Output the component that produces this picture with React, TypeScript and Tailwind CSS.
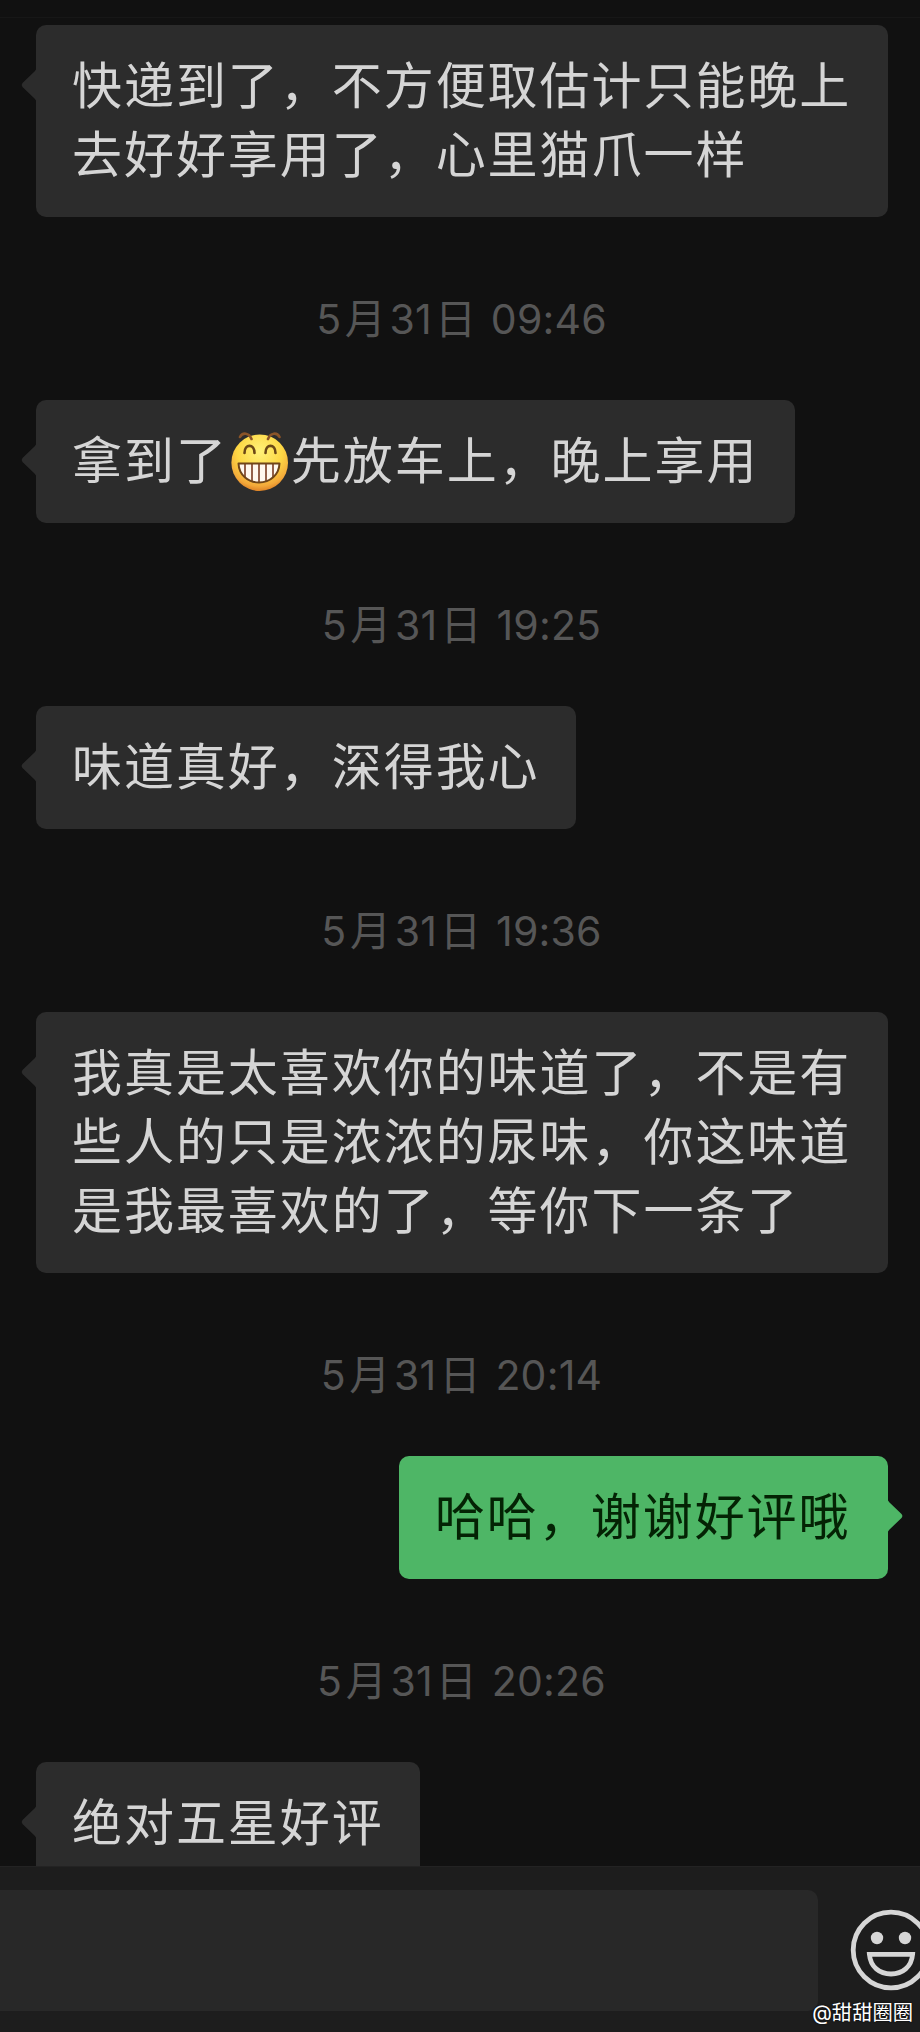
import type { ReactNode } from "react";
import clsx from "clsx";

type ChatItem =
    | { kind: "time"; month: number; day: number; time: string }
    | { kind: "message"; mine?: boolean; lines: ReactNode[] };

function GrinEmoji() {
    return (
        <svg viewBox="0 0 63 62" className="inline-block w-[63px] h-[62px] -mt-2 -mb-1 align-[-10.5px]">
            <defs>
                <radialGradient id="face" cx="0.5" cy="0.3" r="0.72">
                    <stop offset="0" stopColor="#fff27a" />
                    <stop offset="0.55" stopColor="#fdd744" />
                    <stop offset="0.85" stopColor="#f3a93a" />
                    <stop offset="1" stopColor="#d97a22" />
                </radialGradient>
                <clipPath id="teeth">
                    <path d="M10.500 31.500H51.500C51 43 42 50.500 31 50.500S11 43 10.500 31.500Z" />
                </clipPath>
            </defs>
            <circle cx="31.700" cy="30.700" r="28.300" fill="url(#face)" />
            <path d="M12 5C14.500 0 21 0.500 23.500 7M40 7C42.500 0.500 49 0 51.500 5" fill="none" stroke="#8a5428" strokeWidth="2.600" strokeLinecap="round" />
            <path d="M16.500 21C16.500 11.500 26.500 11.500 26.500 21M37.500 21C37.500 11.500 47.500 11.500 47.500 21" fill="none" stroke="#6b4716" strokeWidth="2.600" strokeLinecap="round" />
            <g clipPath="url(#teeth)">
                <rect x="10" y="31" width="42" height="22" fill="#fff8ee" />
                <path d="M17 31V54M24 31V54M31 31V54M38 31V54M45 31V54" stroke="#93614a" strokeWidth="2" />
            </g>
            <path d="M10.500 31.500H51.500C51 43 42 50.500 31 50.500S11 43 10.500 31.500Z" fill="none" stroke="#6f4519" strokeWidth="2" strokeLinejoin="round" />
        </svg>
    );
}

const items: ChatItem[] = [
    { kind: "message", lines: ["快递到了，不方便取估计只能晚上", "去好好享用了，心里猫爪一样"] },
    { kind: "time", month: 5, day: 31, time: "09:46" },
    { kind: "message", lines: [<>拿到了<GrinEmoji />先放车上，晚上享用</>] },
    { kind: "time", month: 5, day: 31, time: "19:25" },
    { kind: "message", lines: ["味道真好，深得我心"] },
    { kind: "time", month: 5, day: 31, time: "19:36" },
    { kind: "message", lines: ["我真是太喜欢你的味道了，不是有", "些人的只是浓浓的尿味，你这味道", "是我最喜欢的了，等你下一条了"] },
    { kind: "time", month: 5, day: 31, time: "20:14" },
    { kind: "message", mine: true, lines: ["哈哈，谢谢好评哦"] },
    { kind: "time", month: 5, day: 31, time: "20:26" },
    { kind: "message", lines: ["绝对五星好评"] },
];

function Timestamp({ month, day, time }: { month: number; day: number; time: string }) {
    return (
        <div className="h-[183px] shrink-0 pt-[22px] pl-[3px] flex items-center justify-center">
            <p className="text-[41px] tracking-[0.2px] text-[#565656] whitespace-pre">
                {month}<span className="mx-[3.5px]">月</span>{day}<span className="mx-[3px]">日</span> {time}
            </p>
        </div>
    );
}

function Bubble({ mine, lines }: { mine?: boolean; lines: ReactNode[] }) {
    return (
        <div className={clsx("flex shrink-0 pr-8 pl-9", mine && "justify-end")}>
            <div
                className={clsx(
                    "relative rounded-[10px] pl-9 pt-[27px] pb-[27px] text-[50px] leading-[69px] tracking-[1.95px] whitespace-nowrap",
                    mine ? "pr-[37.5px] bg-[#4eb666] text-[#042304]" : "pr-[36.5px] bg-[#2c2c2c] text-[#d5d5d5]"
                )}
            >
                <svg
                    viewBox="0 0 16 34"
                    className={clsx(
                        "absolute top-[43px] w-4 h-[34px]",
                        mine ? "left-full -scale-x-100 text-[#4eb666]" : "right-full text-[#2c2c2c]"
                    )}
                >
                    <path d="M16 1.500L14.500 3.500L2.500 15Q0.800 17 2.500 19L14.500 30.500L16 32.500Z" fill="currentColor" />
                </svg>
                {lines.map((line, i) => (
                    <div key={i} className="h-[69px]">{line}</div>
                ))}
            </div>
        </div>
    );
}

function SmileIcon() {
    return (
        <svg viewBox="0 0 82 82" className="w-[82px] h-[82px] shrink-0" fill="none" stroke="#d6d6d6" strokeWidth="4.800">
            <circle cx="41" cy="41" r="37.800" />
            <circle cx="27" cy="29" r="6.200" fill="#d6d6d6" stroke="none" />
            <circle cx="55" cy="29" r="6.200" fill="#d6d6d6" stroke="none" />
            <path d="M19.400 45.400H62.600C61.500 58 52.500 65 41 65S20.500 58 19.400 45.400Z" />
        </svg>
    );
}

export default function App() {
    return (
        <div className="w-[920px] h-[2032px] bg-[#111111] overflow-hidden flex flex-col font-[Inter,'Noto_Sans_CJK_SC',sans-serif]">
            <div className="h-[18px] shrink-0 border-b border-[#171717]" />
            <main className="flex-1 min-h-0 overflow-hidden flex flex-col pt-[7px]">
                {items.map((item, i) =>
                    item.kind === "time" ? (
                        <Timestamp key={i} month={item.month} day={item.day} time={item.time} />
                    ) : (
                        <Bubble key={i} mine={item.mine} lines={item.lines} />
                    )
                )}
            </main>
            {/* Input bar */}
            <footer className="relative h-[166px] shrink-0 bg-[#1d1d1d] border-t border-[#232323] flex pt-[23px] overflow-hidden">
                <div className="w-[818px] h-[121px] shrink-0 rounded-r-[10px] bg-[#282828]" />
                <div className="pl-8 pt-[19px] shrink-0">
                    <SmileIcon />
                </div>
                <span className="absolute right-[7px] bottom-[4px] text-[20.300px] leading-[30px] text-white [text-shadow:0_0_2px_#000]">
                    @甜甜圈圈
                </span>
            </footer>
        </div>
    );
}
